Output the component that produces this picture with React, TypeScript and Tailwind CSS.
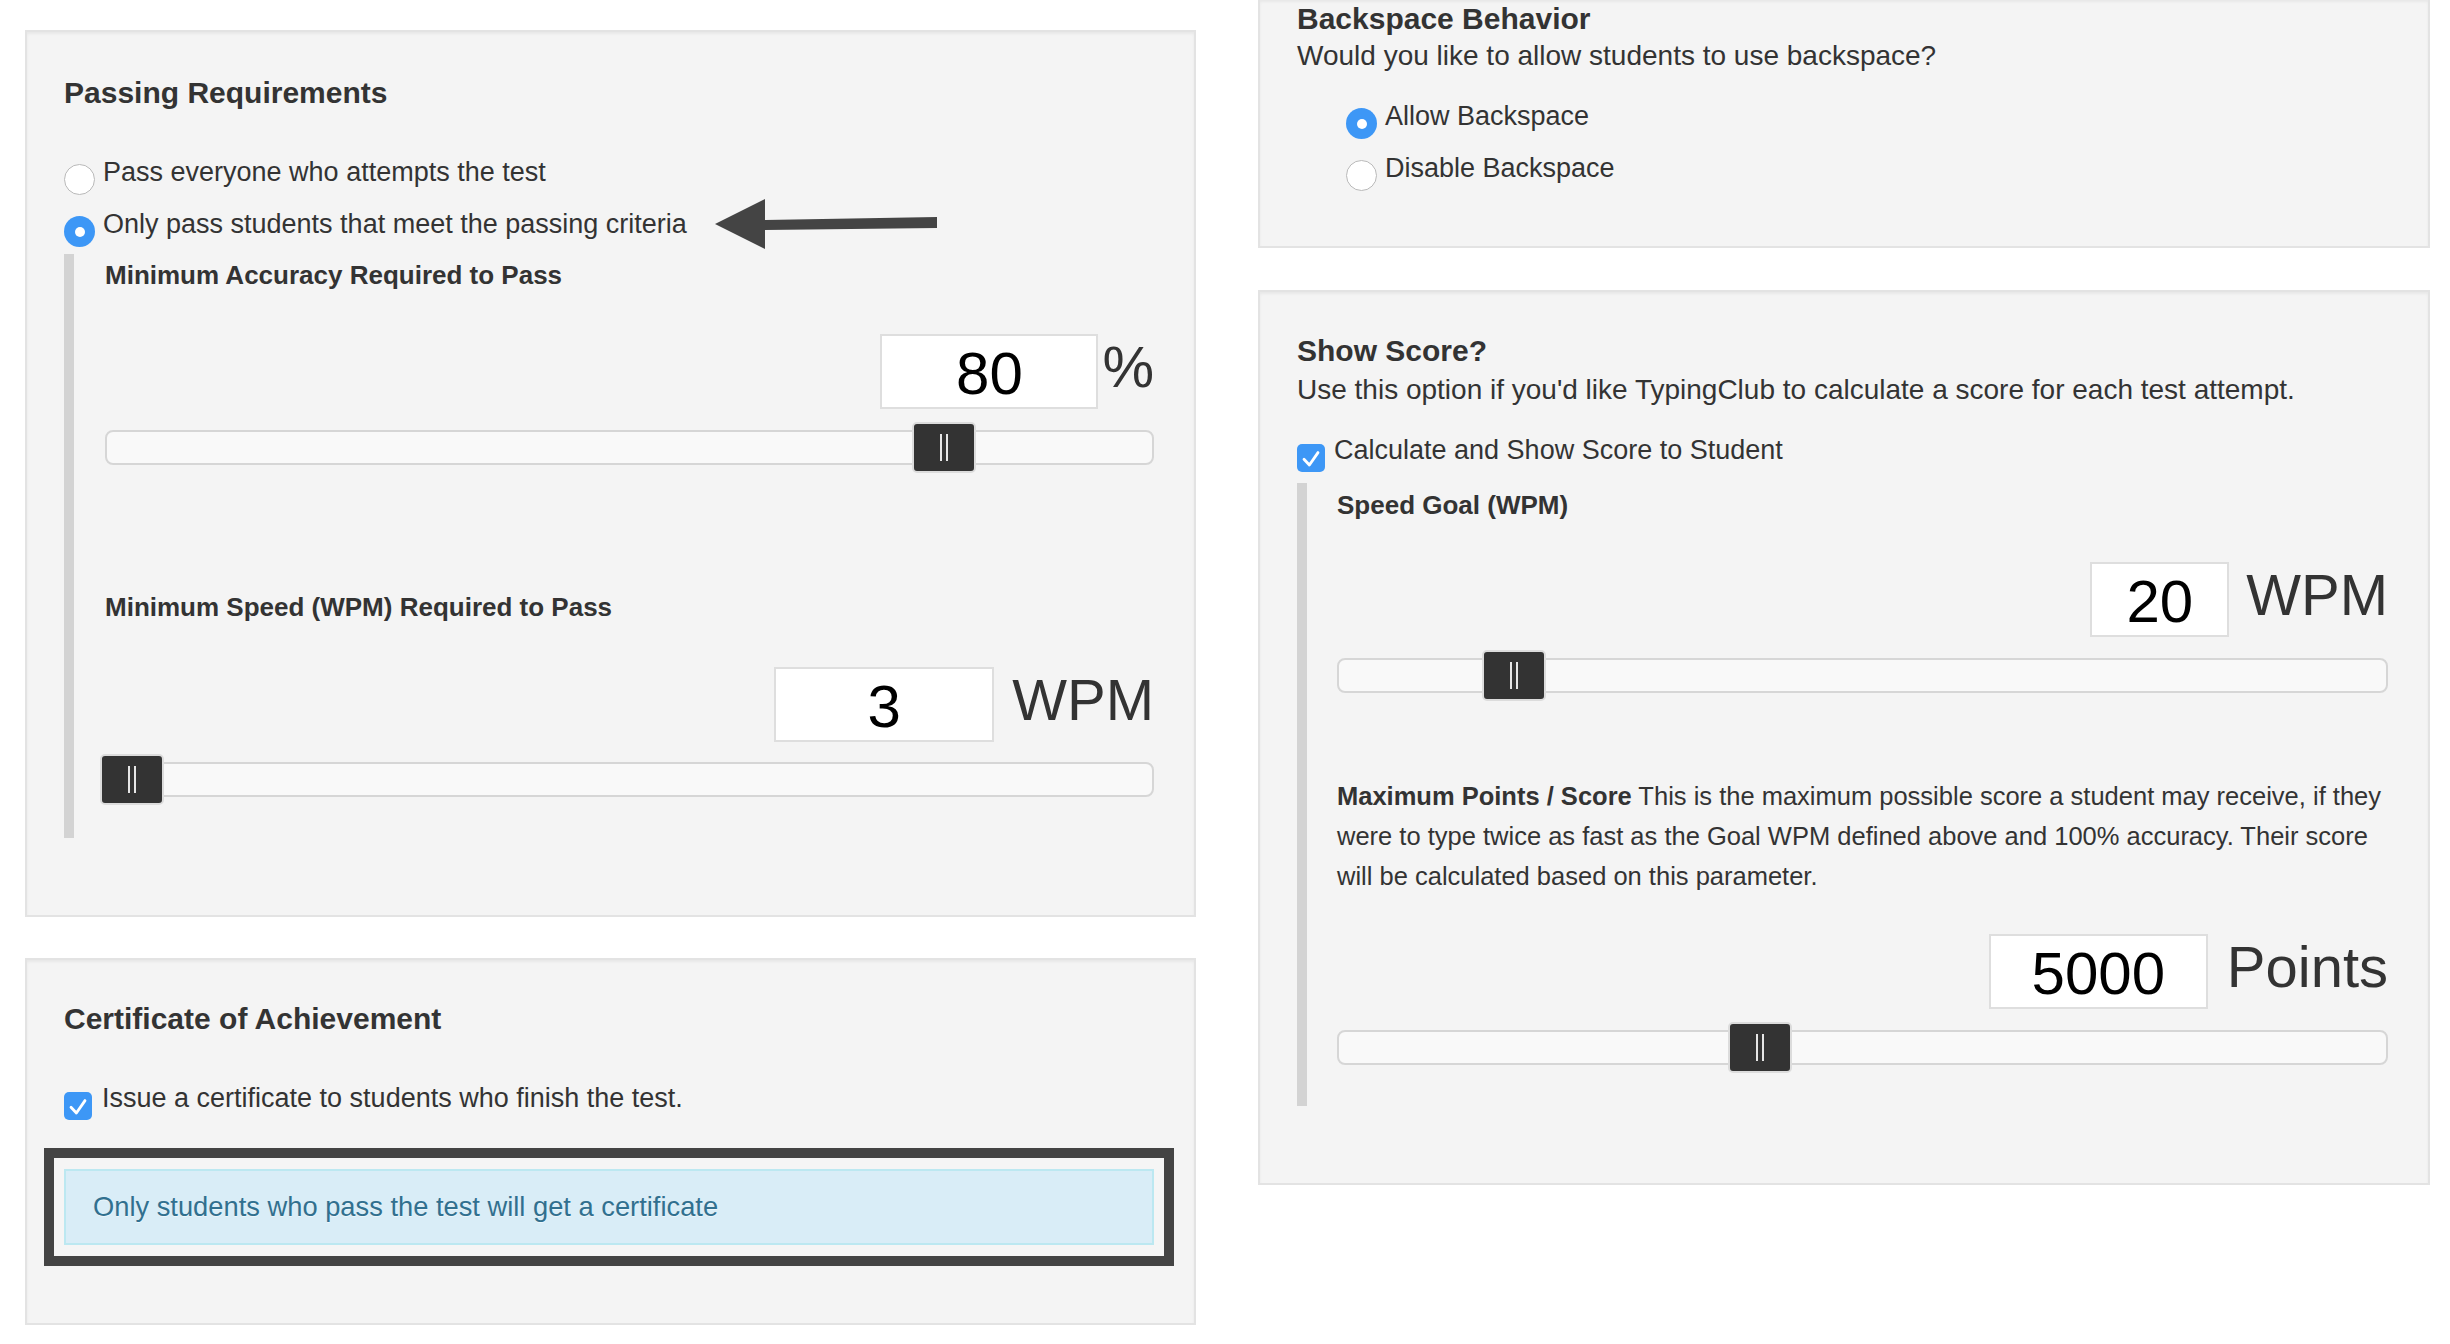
import React from "react"

const panel =
    "border-2 border-[#e3e3e3] bg-[#f4f4f4] shadow-[inset_0_2px_3px_rgba(0,0,0,0.05)]"

function Radio({ checked }: { checked?: boolean }) {
    if (checked) {
        return (
            <span className="mt-[18px] flex h-[31px] w-[31px] shrink-0 items-center justify-center rounded-full bg-[#3d97f6]">
                <span className="h-[10px] w-[10px] rounded-full bg-white" />
            </span>
        )
    }
    return <span className="mt-[18px] h-[31px] w-[31px] shrink-0 rounded-full border-[1.5px] border-[#b9b9b9] bg-white" />
}

function Checkbox() {
    return (
        <span className="mt-[20px] flex h-[28px] w-[28px] shrink-0 items-center justify-center rounded-[5px] bg-[#3d97f6]">
            <svg viewBox="0 0 28 28" className="h-[28px] w-[28px]">
                <path d="M7 15.2 L12.4 21 L21 8.6" stroke="white" strokeWidth="2.8" fill="none" strokeLinecap="round" strokeLinejoin="round" />
            </svg>
        </span>
    )
}

function Slider({ pct }: { pct: number }) {
    return (
        <div className="relative h-[35px] rounded-[8px] border-2 border-[#d6d6d6] bg-[#f9f9f9]">
            {/* thumb */}
            <div
                className="absolute top-[-10px] flex h-[51px] w-[64px] items-center justify-center gap-[4px] rounded-[5px] border-2 border-[#dcdcdc] bg-[#333]"
                style={{ left: `calc(${pct}% - 34px)` }}
            >
                <span className="h-[27px] w-[2px] bg-[#e6e6e6]" />
                <span className="h-[27px] w-[2px] bg-[#e6e6e6]" />
            </div>
        </div>
    )
}

function NumRow({ value, unit, boxW, gap }: { value: string; unit: string; boxW: string; gap: string }) {
    return (
        <div className="flex items-start justify-end">
            <div className={`${boxW} h-[75px] border-2 border-[#dedede] bg-white pt-[5px] text-center text-[60px] leading-[65px] text-black`}>
                {value}
            </div>
            <span className={`${gap} text-[58px] leading-[66px] text-[#333]`}>{unit}</span>
        </div>
    )
}

function Arrow() {
    return (
        <svg viewBox="0 0 222 50" className="mt-[1px] ml-[20px] h-[50px] w-[222px] shrink-0">
            <polygon points="0,25 50,0 50,21 222,18 222,29 50,31 50,50" fill="#444" />
        </svg>
    )
}

export default function App() {
    return (
        <div className="h-[1344px] w-[2450px] overflow-hidden bg-white font-['Liberation_Sans',Arial,sans-serif] text-[#333]">
            <div className="ml-[25px] flex gap-[62px]">
                {/* left column */}
                <div className="w-[1171px]">
                    <div className={`${panel} mt-[30px] h-[887px] pt-[43px] pr-[40px] pl-[37px]`}>
                        <h2 className="text-[30px] leading-[36px] font-bold">Passing Requirements</h2>
                        <div className="mt-[35px] text-[27px] leading-[52px]">
                            <div className="flex items-start gap-[8px]">
                                <Radio />
                                <span>Pass everyone who attempts the test</span>
                            </div>
                            <div className="flex items-start gap-[8px]">
                                <Radio checked />
                                <span>Only pass students that meet the passing criteria</span>
                                <Arrow />
                            </div>
                        </div>
                        <div className="mt-[4px] border-l-[10px] border-[#d3d3d3] pt-[5px] pb-[41px] pl-[31px]">
                            <div className="text-[26px] leading-[32px] font-bold">Minimum Accuracy Required to Pass</div>
                            <div className="mt-[43px]">
                                <NumRow value="80" unit="%" boxW="w-[218px]" gap="ml-[4px]" />
                            </div>
                            <div className="mt-[21px]">
                                <Slider pct={80.3} />
                            </div>
                            <div className="mt-[126px] text-[26px] leading-[32px] font-bold">Minimum Speed (WPM) Required to Pass</div>
                            <div className="mt-[44px]">
                                <NumRow value="3" unit="WPM" boxW="w-[220px]" gap="ml-[18px]" />
                            </div>
                            <div className="mt-[20px]">
                                <Slider pct={2.6} />
                            </div>
                        </div>
                    </div>

                    <div className={`${panel} mt-[41px] h-[367px] pt-[41px] pr-[40px] pl-[37px]`}>
                        <h2 className="text-[30px] leading-[36px] font-bold">Certificate of Achievement</h2>
                        <div className="mt-[35px] flex items-start gap-[10px] text-[27px] leading-[52px]">
                            <Checkbox />
                            <span>Issue a certificate to students who finish the test.</span>
                        </div>
                        {/* highlighted note */}
                        <div className="mt-[24px] -ml-[20px] w-[1130px] border-[10px] border-[#444] bg-[#f5f5f5] px-[10px] py-[11px]">
                            <div className="flex h-[76px] items-center border-2 border-[#bce8f1] bg-[#d9edf7] pl-[27px] text-[27.3px] text-[#31708f] [text-shadow:0_1px_0_rgba(255,255,255,0.5)]">
                                Only students who pass the test will get a certificate
                            </div>
                        </div>
                    </div>
                </div>

                {/* right column */}
                <div className="w-[1172px]">
                    <div className={`${panel} h-[248px] border-t-0 pt-[1px] pr-[40px] pl-[37px]`}>
                        <h2 className="text-[30px] leading-[36px] font-bold">Backspace Behavior</h2>
                        <p className="text-[28px] leading-[38px]">Would you like to allow students to use backspace?</p>
                        <div className="mt-[15px] ml-[49px] text-[27px] leading-[52px]">
                            <div className="flex items-start gap-[8px]">
                                <Radio checked />
                                <span>Allow Backspace</span>
                            </div>
                            <div className="flex items-start gap-[8px]">
                                <Radio />
                                <span>Disable Backspace</span>
                            </div>
                        </div>
                    </div>

                    <div className={`${panel} mt-[42px] h-[895px] pt-[41px] pr-[40px] pl-[37px]`}>
                        <h2 className="text-[30px] leading-[36px] font-bold">Show Score?</h2>
                        <p className="mt-[2px] text-[28px] leading-[38px]">
                            Use this option if you'd like TypingClub to calculate a score for each test attempt.
                        </p>
                        <div className="mt-[15px] flex items-start gap-[9px] text-[27px] leading-[52px]">
                            <Checkbox />
                            <span>Calculate and Show Score to Student</span>
                        </div>
                        <div className="mt-[7px] border-l-[10px] border-[#d3d3d3] pt-[6px] pb-[41px] pl-[30px]">
                            <div className="text-[26px] leading-[32px] font-bold">Speed Goal (WPM)</div>
                            <div className="mt-[41px]">
                                <NumRow value="20" unit="WPM" boxW="w-[139px]" gap="ml-[17px]" />
                            </div>
                            <div className="mt-[21px]">
                                <Slider pct={16.9} />
                            </div>
                            <p className="mt-[83px] text-[25.5px] leading-[40px]">
                                <b>Maximum Points / Score</b> This is the maximum possible score a student may receive, if they
                                <br />
                                were to type twice as fast as the Goal WPM defined above and 100% accuracy. Their score
                                <br />
                                will be calculated based on this parameter.
                            </p>
                            <div className="mt-[38px]">
                                <NumRow value="5000" unit="Points" boxW="w-[219px]" gap="ml-[19px]" />
                            </div>
                            <div className="mt-[21px]">
                                <Slider pct={40.4} />
                            </div>
                        </div>
                    </div>
                </div>
            </div>
        </div>
    )
}
